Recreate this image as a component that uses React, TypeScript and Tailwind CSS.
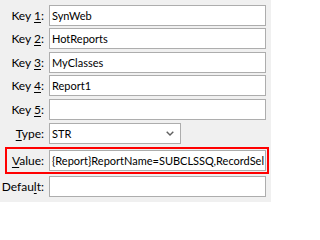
import React from "react"

const font = { fontFamily: 'Lato, "Noto Sans", sans-serif' }

function Label({ pre, u, post, w = "w-[44px]" }: { pre: string; u: string; post: string; w?: string }) {
  return (
    <span className={`${w} shrink-0 text-right text-[12px] text-black leading-none whitespace-pre`}>
      {pre}
      <span className="underline underline-offset-2">{u}</span>
      {post}
    </span>
  )
}

function TextBox({ value }: { value: string }) {
  return (
    <div className="ml-[5px] w-[217px] h-[21px] shrink-0 bg-white border border-[#adadad] flex items-center pl-[2px] overflow-hidden">
      <span className="text-[11px] text-black leading-none whitespace-nowrap">{value}</span>
    </div>
  )
}

function Row({ pre, u, post, value, mt }: { pre: string; u: string; post: string; value: string; mt: string }) {
  return (
    <div className={`flex items-center h-[21px] ${mt}`}>
      <Label pre={pre} u={u} post={post} />
      <TextBox value={value} />
    </div>
  )
}

export default function App() {
  return (
    <div className="w-[271px] h-[202px] bg-[#f0f0f0] overflow-hidden" style={font}>
      <div className="pt-[5px] flex flex-col">
        <Row pre="Key " u="1" post=":" value="SynWeb" mt="mt-0" />
        <Row pre="Key " u="2" post=":" value="HotReports" mt="mt-[2px]" />
        <Row pre="Key " u="3" post=":" value="MyClasses" mt="mt-[3px]" />
        <Row pre="Key " u="4" post=":" value="Report1" mt="mt-[2px]" />
        <Row pre="Key " u="5" post=":" value="" mt="mt-[3px]" />

        {/* Type combo */}
        <div className="flex items-center h-[21px] mt-[3px]">
          <Label pre="" u="T" post="ype:" />
          <div className="ml-[5px] w-[132px] h-[21px] bg-white border border-[#adadad] flex items-center pl-[2px] pr-[6px]">
            <span className="flex-1 text-[11px] text-black leading-none">STR</span>
            <svg width="8" height="5" viewBox="0 0 8 5" className="shrink-0">
              <path d="M0.7 0.7 L4 4 L7.3 0.7" fill="none" stroke="#606060" strokeWidth="1.4" />
            </svg>
          </div>
        </div>

        {/* Value, highlighted */}
        <div className="mt-[3px] ml-[5px] w-[264px] h-[27px] border-2 border-[#ff0000] flex items-center">
          <Label pre="" u="V" post="alue:" w="w-[37px]" />
          <TextBox value="{Report}ReportName=SUBCLSSQ,RecordSel" />
        </div>

        <div className="flex items-center h-[21px] mt-[2px]">
          <Label pre="Defau" u="l" post="t:" />
          <TextBox value="" />
        </div>
      </div>
    </div>
  )
}
